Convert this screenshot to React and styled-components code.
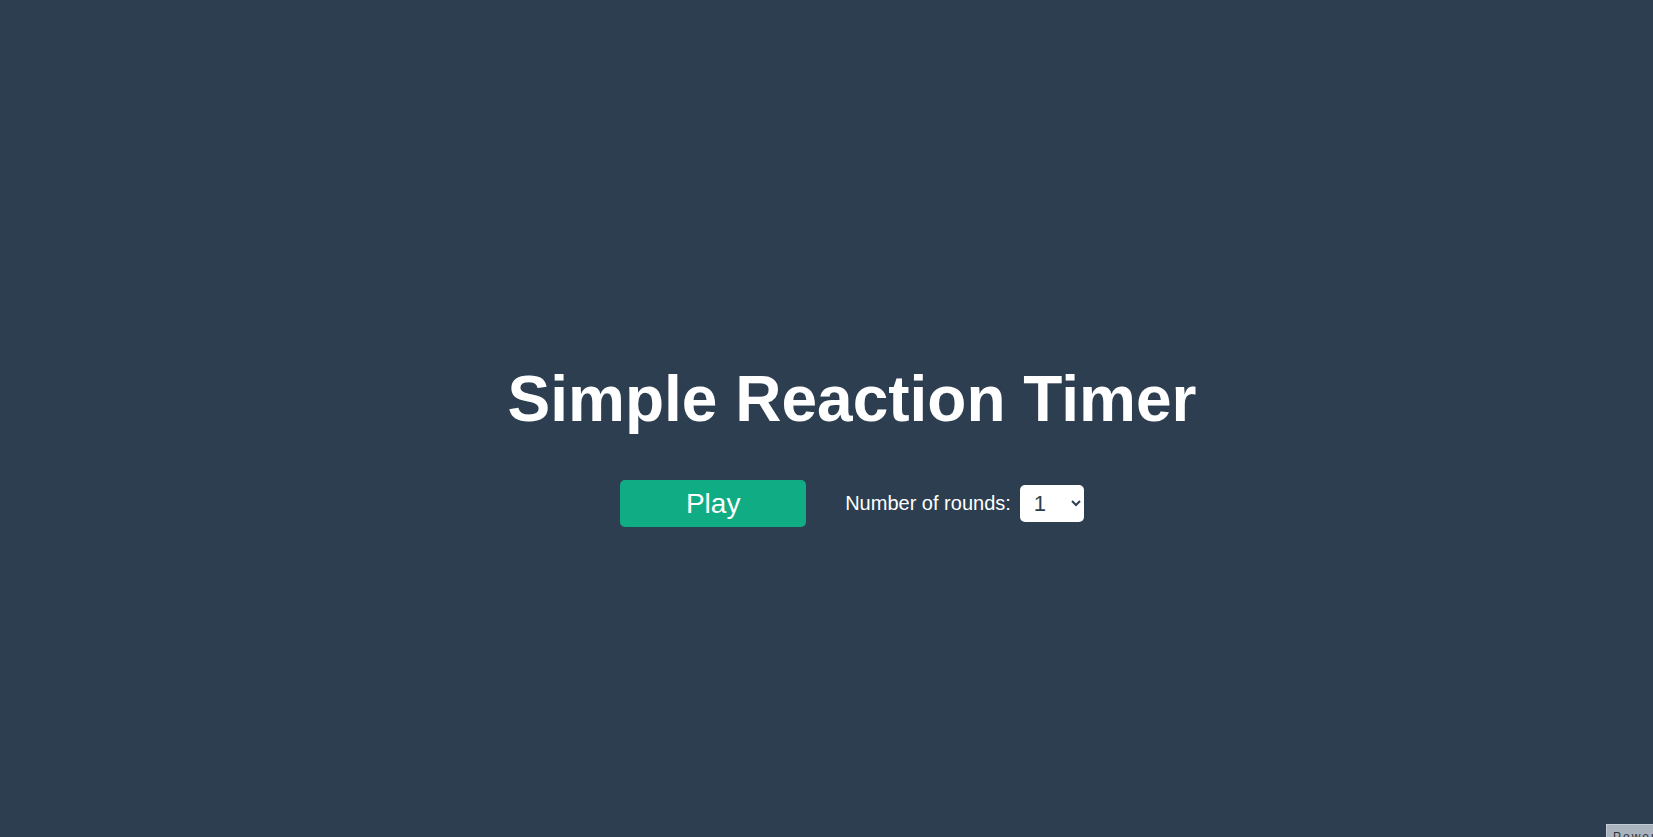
import React from 'react'
import styled, {createGlobalStyle} from 'styled-components'

const GlobalStyle = createGlobalStyle`
  html, body {
    margin: 0;
    padding: 0;
    background: #2c3e50;
    font-family: "Liberation Sans", Arial, sans-serif;
    overflow: hidden;
  }
`

export default function App() {
  return (
    <>
      <GlobalStyle />
      <Page>
        <Title>Simple Reaction Timer</Title>
        <Controls>
          <PlayButton>Play</PlayButton>
          <RoundsLabel>
            Number of rounds:
            <RoundsSelect defaultValue='1'>
              <option value='1'>1</option>
              <option value='2'>2</option>
              <option value='3'>3</option>
              <option value='4'>4</option>
              <option value='5'>5</option>
            </RoundsSelect>
          </RoundsLabel>
        </Controls>
      </Page>
      <Badge>Powered by</Badge>
    </>
  )
}

const Page = styled('div')`
  min-height: 100vh;
  box-sizing: border-box;
  padding: 52px 0 0 51px;
  display: flex;
  flex-direction: column;
  align-items: center;
  justify-content: center;
  color: #fff;
  `

const Title = styled('h1')`
  margin: 0;
  font-size: 64px;
  font-weight: 700;
  color: #fff;
  `

const Controls = styled('div')`
  margin-top: 44px;
  display: flex;
  align-items: center;
  gap: 39px;
  `

const PlayButton = styled('button')`
  width: 186px;
  height: 47px;
  border: none;
  border-radius: 5px;
  background: #10ac84;
  color: #fff;
  font-family: "Liberation Sans", Arial, sans-serif;
  font-size: 28px;
  cursor: pointer;
  `

const RoundsLabel = styled('label')`
  display: flex;
  align-items: center;
  gap: 9px;
  font-size: 20px;
  color: #fff;
  `

const RoundsSelect = styled('select')`
  width: 64px;
  height: 37px;
  border: none;
  border-radius: 5px;
  background: #fff;
  color: #2c3e50;
  padding: 0 6px 0 10px;
  font-family: "Liberation Sans", Arial, sans-serif;
  font-size: 22px;
  `

const Badge = styled('div')`
  position: fixed;
  right: 0;
  bottom: -30px;
  width: 40px;
  height: 37px;
  padding: 5px 0 0 6px;
  background: #aab4be;
  border-top: 1px solid #c3cad2;
  border-left: 1px solid #c3cad2;
  color: #333;
  font-size: 12px;
  letter-spacing: 2px;
  white-space: nowrap;
  overflow: hidden;
  `
